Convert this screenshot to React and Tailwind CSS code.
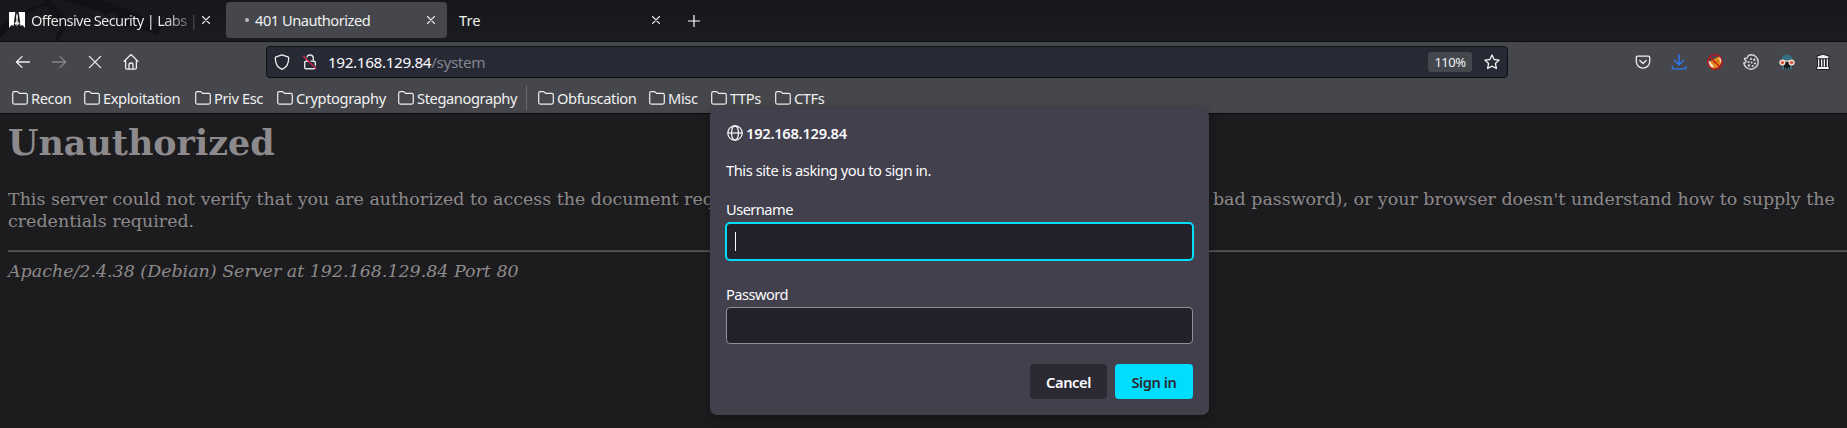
import React from "react";

const Folder = () => (
  <svg className="size-4 shrink-0" viewBox="0 0 16 16" fill="none" stroke="#f0f0ef" strokeWidth="1.2" strokeLinejoin="round">
    <path d="M.7 3.2c0-.9.6-1.5 1.5-1.5h3.1c.5 0 .8.2 1.1.5l1.1 1.2h6.3c.9 0 1.5.6 1.5 1.5v7.700c0 .9-.6 1.500-1.500 1.500H2.200c-.9 0-1.500-.6-1.500-1.500z" />
  </svg>
);

const Bookmark = ({ label, width }) => (
  <div className={`flex shrink-0 items-center gap-[3px] ${width}`}>
    <Folder />
    <span>{label}</span>
  </div>
);

const Close = () => (
  <svg className="size-2 shrink-0" viewBox="0 0 8 8" stroke="#e8e8e8" strokeWidth="1.1" strokeLinecap="round">
    <path d="M.5.5l7 7M7.5.5l-7 7" />
  </svg>
);

const OffsecLogo = () => (
  <svg className="size-4 shrink-0" viewBox="0 0 16 16">
    <path fill="#fff" d="M0 0h6.300L5.500 9.500 4.500 14 2.500 13 0 16zM16 0H9.700l.8 9.500 1 4.500 2-1L16 16z" />
    <path fill="#1a1b1f" d="M6 2h4l1.200 11L8 16l-3.200-3z" />
    <path fill="#e4e4e4" d="M8 1l1 3-.3 5 2 2.700-1 1-1-.5L8 15l-.7-2.800-1 .5-1-1 2-2.700L7 4z" />
  </svg>
);

const DragonArt = () => (
  <svg className="absolute left-0 top-0 h-[41px] w-[180px]" viewBox="0 0 180 41" fill="#111216">
    <path d="M0 27C12 16 28 7 48 2l2 2C32 9 20 17 12 26l-12 12z" />
    <path d="M44 0h7c6 8 12 15 18 20l-4 10-7 11h-4l7-14c-7-8-13-17-17-27z" />
    <path d="M62 0h40c22 7 41 15 59 28l-3 7c-12-5-22-8-34-8l-9-4 6-3C103 12 83 6 62 0z" />
    <path d="M93 13l8-2 8 9-7 3zM107 13l7-1 7 8-7 2z" fill="#1b1c20" />
  </svg>
);

const Field = ({ label, className, children }) => (
  <div className="flex flex-col">
    <span className="h-5 leading-5 tracking-[-0.55px]">{label}</span>
    <div className={className}>{children}</div>
  </div>
);

export default function App() {
  return (
    <div className="relative flex h-[428px] w-[1847px] flex-col overflow-hidden bg-[#1c1b1d] font-['Noto_Sans',sans-serif] text-[14.67px] leading-5 text-[#f0f0ef]">
      <header className="relative flex h-[42px] shrink-0 items-start border-b border-[#0d0e11] bg-[#1a1b1f] bg-linear-to-b from-[#16171b] to-[#1b1c20] tracking-[-0.5px]">
        <DragonArt />
        <div className="relative mt-[2px] flex h-9 w-[226px] items-center pl-[9px]">
          <OffsecLogo />
          <span className="ml-[6px] w-[165px] whitespace-nowrap bg-linear-to-r from-[#f0f0ef] from-80% to-[#444549] bg-clip-text text-transparent tracking-[-0.65px]">
            Offensive Security | Labs |
          </span>
          <span className="ml-[6px]"><Close /></span>
        </div>
        <div className="relative mt-[2px] flex h-9 w-[221px] items-center rounded bg-[#45474d] pl-[19px]">
          <span className="size-1 rounded-full bg-[#b9babc]" />
          <span className="ml-[6px] w-[172px]">401 Unauthorized</span>
          <Close />
        </div>
        <div className="relative mt-[2px] flex h-9 w-[221px] items-center pl-3">
          <span className="w-[193px] tracking-normal">Tre</span>
          <Close />
        </div>
        <svg className="relative ml-5 mt-[15px] size-3" viewBox="0 0 12 12" stroke="#fff" strokeWidth="1.2">
          <path d="M6 0v12M0 6h12" />
        </svg>
      </header>

      <nav className="flex h-[72px] shrink-0 flex-col border-b border-[#0c0c0d] bg-[#45474d]">
        <div className="flex h-10 shrink-0 items-center">
          <div className="flex w-[266px] items-center gap-5 pl-[15px]">
            <svg className="size-4" viewBox="0 0 16 16" fill="none" stroke="#f0f0ef" strokeWidth="1.3" strokeLinecap="round" strokeLinejoin="round">
              <path d="M14.5 8h-13M7 2.6L1.4 8 7 13.4" />
            </svg>
            <svg className="size-4" viewBox="0 0 16 16" fill="none" stroke="#85868a" strokeWidth="1.3" strokeLinecap="round" strokeLinejoin="round">
              <path d="M1.5 8h13M9 2.6L14.6 8 9 13.4" />
            </svg>
            <svg className="size-4" viewBox="0 0 16 16" fill="none" stroke="#f0f0ef" strokeWidth="1.3" strokeLinecap="round">
              <path d="M2.4 2.4l11.2 11.2M13.6 2.4L2.4 13.6" />
            </svg>
            <svg className="size-4" viewBox="0 0 16 16" fill="none" stroke="#f0f0ef" strokeWidth="1.3" strokeLinecap="round" strokeLinejoin="round">
              <path d="M1 7.4L7.2 1.2c.5-.5 1.1-.5 1.6 0L15 7.4M2.6 6.2v7.5c0 .9.5 1.4 1.4 1.4h8c.9 0 1.4-.5 1.4-1.4V6.2M6 15v-4.2C6 9.6 6.8 9 8 9s2 .6 2 1.8V15" />
            </svg>
          </div>
          <div className="flex h-8 w-[1242px] items-center rounded border border-[#0d0e13] bg-[#272935] pl-[7px]">
            <svg className="size-4" viewBox="0 0 16 16" fill="none" stroke="#f0f0ef" strokeWidth="1.3" strokeLinejoin="round">
              <path d="M8 .8l5.9 2c.5.2.8.5.8 1.1C14.7 9.5 12.6 13.4 8 15.3 3.4 13.4 1.3 9.5 1.3 3.900c0-.6.3-.9.8-1.1z" />
            </svg>
            <svg className="ml-3 size-4" viewBox="0 0 16 16" fill="none" stroke="#e6e6e6" strokeWidth="1.4">
              <path d="M4.7 6.5V4.2C4.7 2.2 6 1 8 1s3.3 1.2 3.3 3.2v2.3" />
              <rect x="2.7" y="7.2" width="10.6" height="7.6" rx="1.3" />
              <path d="M1.500 1l14 14" stroke="#272935" strokeWidth="1.500" />
              <path d="M1 1.700l13.400 13.400" stroke="#e22850" strokeWidth="1.3" />
            </svg>
            <span className="ml-[10px] w-[1100px] text-[15.3px] tracking-[-0.38px] text-[#fbfbfe]">
              192.168.129.84<span className="text-[#84858c]">/system</span>
            </span>
            <span className="flex h-5 w-11 items-center justify-center rounded-[3px] bg-[#45474f] text-[13px] tracking-[-0.5px]">110%</span>
            <svg className="ml-3 size-4" viewBox="0 0 16 16" fill="none" stroke="#f0f0ef" strokeWidth="1.3" strokeLinejoin="round">
              <path d="M8 .9l2.1 4.600 5 .6-3.7 3.4 1 5L8 12.1l-4.400 2.4 1-5L.9 6.1l5-.6z" />
            </svg>
          </div>
          <div className="ml-[127px] flex items-center gap-5">
            <svg className="size-4" viewBox="0 0 16 16" fill="none" stroke="#f0f0ef" strokeWidth="1.3" strokeLinecap="round" strokeLinejoin="round">
              <path d="M2.6 2.2h10.8c.8 0 1.3.5 1.3 1.3v4c0 3.8-3 6.7-6.7 6.7S1.3 11.3 1.3 7.5v-4c0-.8.5-1.3 1.3-1.3zM4.8 6.5L8 9.5l3.2-3" />
            </svg>
            <svg className="size-4" viewBox="0 0 16 16" fill="none" stroke="#2a7af5" strokeWidth="1.4" strokeLinecap="round" strokeLinejoin="round">
              <path d="M8 .8v9.7M3.5 6.2L8 10.7l4.5-4.5M1.3 12.5v.9c0 1 .6 1.5 1.5 1.5h10.4c.9 0 1.5-.5 1.5-1.5v-.9" />
            </svg>
            <svg className="size-4" viewBox="0 0 16 16">
              <path fill="#e88a1a" d="M3 7.500l3-2L9 4l3.500-2 2 4-.5 3.500-2.500 3.500-5 2L3 13z" />
              <path fill="#f7ead8" d="M1 6.5l2 1L4.500 10l2 1.5-.5 2L3 12zM12.5 2l2.5 4-1 3-1.500-3z" />
              <path fill="#5b3818" d="M6 8l1.5.5L7 9.5zM10 7l1.5-.5-.5 1.5z" />
              <circle cx="8" cy="8" r="7.3" fill="none" stroke="#c8101a" strokeWidth="1.3" />
              <path d="M2.8 2.8l10.4 10.4" stroke="#c8101a" strokeWidth="1.3" />
            </svg>
            <svg className="size-4" viewBox="0 0 16 16" fill="none" stroke="#d6d6d7" strokeWidth="1.4" strokeLinejoin="round">
              <path d="M8 .8a7.200 7.200 0 1 1-7.200 8c1.700 0 2.400-.9 2.200-2.300-1.200-.3-1.700-1.300-1.200-2.300 1.300.5 2.600 0 3-1.300C4.900 1.800 6.200.8 8 .8z" />
              <g fill="#d6d6d7" stroke="none">
                <circle cx="8" cy="5" r="1.100" /><circle cx="5.500" cy="8" r="1.100" /><circle cx="8.700" cy="8.600" r="1" />
                <circle cx="11.300" cy="5.800" r="1.200" /><circle cx="12" cy="9.500" r="1.100" /><circle cx="6" cy="11.500" r="1.200" /><circle cx="9.800" cy="12" r="1.100" />
              </g>
            </svg>
            <svg className="size-4" viewBox="0 0 16 16">
              <path fill="#327084" d="M2.5 7C2.5 2.800 5 .8 8 .8S13.5 2.800 13.5 7z" />
              <path fill="#17191c" d="M2 6.500h12V11l-1.500 4h-9L2 11z" />
              <path fill="#3f8797" d="M3 12l2 .5v2.700H3.500zM13 12l-2 .5v2.700h1.500zM6 13.500h1.200v1.700H6zM8.800 13.500H10v1.700H8.800z" />
              <path stroke="#f3dfd5" strokeWidth="1.4" d="M5 7h6" />
              <circle cx="3.400" cy="8.600" r="2.400" fill="#dc513b" stroke="#f0ddd2" strokeWidth="1.400" />
              <circle cx="12.600" cy="8.600" r="2.400" fill="#dc513b" stroke="#f0ddd2" strokeWidth="1.400" />
            </svg>
            <svg className="size-4" viewBox="0 0 16 16">
              <path fill="#1c1d20" d="M8 0l6.500 1.500v3L14 6v6.500l1 1V16H1v-2.500l1-1V6l-.5-1.500v-3z" />
              <path fill="#f2f2f2" d="M8 .8l5.500 1.700v1.800h-11V2.500zM3 5.300h1.300v7.500H3zM6 5.300h1.300v7.500H6zM8.700 5.300H10v7.500H8.700zM11.700 5.300H13v7.500h-1.300zM2.500 13h11v.7H14V15H2v-1.300h.5z" />
            </svg>
          </div>
        </div>
        <div className="flex h-[31px] items-center pl-3 tracking-[-0.4px]">
          <Bookmark label="Recon" width="w-[72px]" />
          <Bookmark label="Exploitation" width="w-[111px]" />
          <Bookmark label="Priv Esc" width="w-[82px]" />
          <Bookmark label="Cryptography" width="w-[121px]" />
          <Bookmark label="Steganography" width="w-[128px]" />
          <span className="mr-[11px] h-[25px] w-px bg-[#68696e]" />
          <Bookmark label="Obfuscation" width="w-[111px]" />
          <Bookmark label="Misc" width="w-[62px]" />
          <Bookmark label="TTPs" width="w-[64px]" />
          <Bookmark label="CTFs" width="w-[64px]" />
        </div>
      </nav>

      <main className="flex flex-col pl-2 pt-2 font-['DejaVu_Serif',serif] text-[17.44px] leading-[22px] text-[#8c8a8c]">
        <h1 className="h-[42px] text-[34.9px] font-bold leading-[42px]">Unauthorized</h1>
        <p className="mt-6">
          This server could not verify that you are authorized to access the document requested. Either you supplied the wrong credentials (e.g., bad password), or your browser doesn't understand how to supply the credentials required.
        </p>
        <hr className="mt-[18px] h-[2px] border-0 border-t border-b border-t-[#464547] border-b-[#59585a]" />
        <address className="mt-2 italic">Apache/2.4.38 (Debian) Server at 192.168.129.84 Port 80</address>
      </main>

      <section className="absolute left-[710px] top-[109px] flex h-[306px] w-[499px] flex-col rounded-[7px] bg-[#42404c] px-4 tracking-[-0.43px] text-[#fbfbfe] shadow-[0_2px_12px_rgba(0,0,0,0.3)]">
        <div className="mt-[14px] flex h-5 items-center gap-[3px] pl-px font-semibold tracking-[-0.25px]">
          <svg className="size-4" viewBox="0 0 16 16" fill="none" stroke="#fbfbfe" strokeWidth="1.2">
            <circle cx="8" cy="8" r="7.2" />
            <ellipse cx="8" cy="8" rx="3.5" ry="7.2" />
            <path d="M.8 8h14.4" />
          </svg>
          192.168.129.84
        </div>
        <p className="mt-[17px] h-5">This site is asking you to sign in.</p>
        <div className="mt-[19px]">
          <Field label="Username" className="-mx-px mt-[3px] flex h-[39px] items-center rounded-[5px] border-2 border-[#00ddff] bg-[#23222b] pl-2">
            <span className="h-[19px] w-px bg-[#fbfbfe]" />
          </Field>
        </div>
        <div className="mt-[23px]">
          <Field label="Password" className="mt-[3px] h-[37px] rounded border border-[#8f8f9d] bg-[#23222b]" />
        </div>
        <div className="mt-5 flex justify-end gap-2 font-semibold">
          <button className="h-[35px] w-[77px] rounded bg-[#2b2a33]">Cancel</button>
          <button className="h-[35px] w-[78px] rounded bg-[#00ddff] text-[#2b2a33]">Sign in</button>
        </div>
      </section>
    </div>
  );
}
